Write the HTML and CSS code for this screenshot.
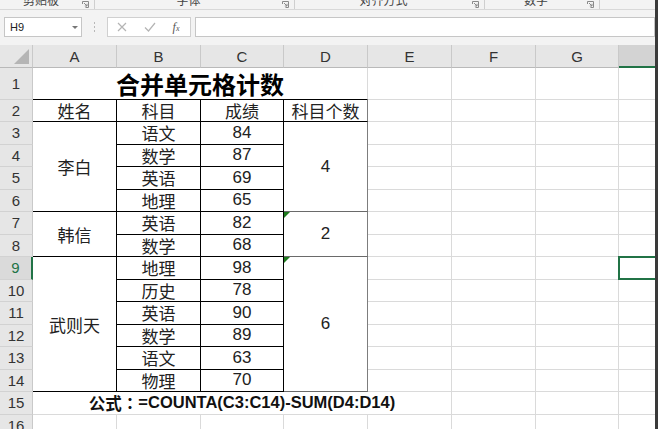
FILE: index.html
```html
<!DOCTYPE html>
<html lang="zh">
<head>
<meta charset="utf-8">
<title>合并单元格计数</title>
<link rel="stylesheet" href="styles.css">
</head>
<body>
<div class="app">
  <div class="ribbon">
    <div class="grp g1"><span class="lbl">剪贴板</span><svg class="launch" width="7" height="7" viewBox="0 0 7 7"><path d="M0.5 3V0.5H6.5V6.5H3.5" stroke="#8a8a8a" fill="none"/><path d="M2 2L5 5M5 2.8V5H2.8" stroke="#8a8a8a" fill="none"/></svg></div>
    <div class="grp g2"><span class="lbl">字体</span><svg class="launch" width="7" height="7" viewBox="0 0 7 7"><path d="M0.5 3V0.5H6.5V6.5H3.5" stroke="#8a8a8a" fill="none"/><path d="M2 2L5 5M5 2.8V5H2.8" stroke="#8a8a8a" fill="none"/></svg></div>
    <div class="grp g3"><span class="lbl">对齐方式</span><svg class="launch" width="7" height="7" viewBox="0 0 7 7"><path d="M0.5 3V0.5H6.5V6.5H3.5" stroke="#8a8a8a" fill="none"/><path d="M2 2L5 5M5 2.8V5H2.8" stroke="#8a8a8a" fill="none"/></svg></div>
    <div class="grp g4"><span class="lbl">数字</span><svg class="launch" width="7" height="7" viewBox="0 0 7 7"><path d="M0.5 3V0.5H6.5V6.5H3.5" stroke="#8a8a8a" fill="none"/><path d="M2 2L5 5M5 2.8V5H2.8" stroke="#8a8a8a" fill="none"/></svg></div>
  </div>

  <div class="fbar">
    <div class="namebox"><span class="ref">H9</span><span class="dd"></span></div>
    <div class="vdots"><span></span><span></span><span></span></div>
    <div class="btns">
      <svg width="10" height="10" viewBox="0 0 10 10"><path d="M1 1L9 9M9 1L1 9" stroke="#b4b4b4" stroke-width="1.2" fill="none"/></svg>
      <svg width="12" height="10" viewBox="0 0 12 10"><path d="M1 5.5L4.5 9L11 1" stroke="#b4b4b4" stroke-width="1.2" fill="none"/></svg>
      <span class="fx">f<span class="fxs">x</span></span>
    </div>
    <div class="finput"></div>
  </div>

  <div class="sheet">
    <div class="ch corner"><span class="tri"></span></div>
    <div class="ch">A</div><div class="ch">B</div><div class="ch">C</div><div class="ch">D</div>
    <div class="ch">E</div><div class="ch">F</div><div class="ch">G</div><div class="ch hsel"></div>

    <div class="rh">1</div>
    <div class="c title">合并单元格计数</div>
    <div class="c"></div><div class="c"></div><div class="c"></div><div class="c"></div>

    <div class="rh">2</div>
    <div class="c t">姓名</div><div class="c t">科目</div><div class="c t">成绩</div><div class="c t dr">科目个数</div>
    <div class="c"></div><div class="c"></div><div class="c"></div><div class="c"></div>

    <div class="rh">3</div>
    <div class="c t rs4">李白</div><div class="c t">语文</div><div class="c t">84</div><div class="c t dr db rs4">4</div>
    <div class="c"></div><div class="c"></div><div class="c"></div><div class="c"></div>

    <div class="rh">4</div>
    <div class="c t">数学</div><div class="c t">87</div>
    <div class="c"></div><div class="c"></div><div class="c"></div><div class="c"></div>

    <div class="rh">5</div>
    <div class="c t">英语</div><div class="c t">69</div>
    <div class="c"></div><div class="c"></div><div class="c"></div><div class="c"></div>

    <div class="rh">6</div>
    <div class="c t">地理</div><div class="c t">65</div>
    <div class="c"></div><div class="c"></div><div class="c"></div><div class="c"></div>

    <div class="rh">7</div>
    <div class="c t rs2">韩信</div><div class="c t">英语</div><div class="c t">82</div><div class="c t dr db rs2 err">2</div>
    <div class="c"></div><div class="c"></div><div class="c"></div><div class="c"></div>

    <div class="rh">8</div>
    <div class="c t">数学</div><div class="c t">68</div>
    <div class="c"></div><div class="c"></div><div class="c"></div><div class="c"></div>

    <div class="rh rsel">9</div>
    <div class="c t rs6">武则天</div><div class="c t">地理</div><div class="c t">98</div><div class="c t dr db rs6 err">6</div>
    <div class="c"></div><div class="c"></div><div class="c"></div><div class="c sel"></div>

    <div class="rh">10</div>
    <div class="c t">历史</div><div class="c t">78</div>
    <div class="c"></div><div class="c"></div><div class="c"></div><div class="c"></div>

    <div class="rh">11</div>
    <div class="c t">英语</div><div class="c t">90</div>
    <div class="c"></div><div class="c"></div><div class="c"></div><div class="c"></div>

    <div class="rh">12</div>
    <div class="c t">数学</div><div class="c t">89</div>
    <div class="c"></div><div class="c"></div><div class="c"></div><div class="c"></div>

    <div class="rh">13</div>
    <div class="c t">语文</div><div class="c t">63</div>
    <div class="c"></div><div class="c"></div><div class="c"></div><div class="c"></div>

    <div class="rh">14</div>
    <div class="c t">物理</div><div class="c t">70</div>
    <div class="c"></div><div class="c"></div><div class="c"></div><div class="c"></div>

    <div class="rh">15</div>
    <div class="c formula">公式<span class="colon">：</span>=COUNTA(C3:C14)-SUM(D4:D14)</div>
    <div class="c"></div><div class="c"></div><div class="c"></div>

    <div class="rh">16</div>
    <div class="c"></div><div class="c"></div><div class="c"></div><div class="c"></div>
    <div class="c"></div><div class="c"></div><div class="c"></div><div class="c"></div>
  </div>

  <div class="edge"></div>
</div>
</body>
</html>
```

FILE: styles.css
```css
* { box-sizing: border-box; margin: 0; padding: 0; }
html, body { width: 658px; height: 429px; overflow: hidden; background: #fff; }
body { font-family: "Liberation Sans", "Noto Sans CJK SC", sans-serif; color: #222; }

.app { position: relative; width: 658px; height: 429px; overflow: hidden; background: #f3f3f3; }

/* ribbon group labels (cut off at top, as in the reference) */
.ribbon { height: 10px; border-bottom: 1px solid #d8d8d8; display: flex; overflow: hidden; }
.grp { display: flex; align-items: flex-start; height: 9px; padding-right: 3px; border-right: 1px solid #cfcfcf; }
.g1 { width: 95px; }
.g2 { width: 200px; }
.g3 { width: 190px; }
.g4 { width: 115px; }
.lbl { flex: 1; text-align: center; font-family: "Noto Sans CJK SC", sans-serif; font-size: 12px; line-height: 12px; margin-top: -6px; color: #444; }
.launch { margin-top: 1px; margin-right: 2px; flex: none; }

/* formula bar */
.fbar { display: flex; align-items: center; height: 35px; padding: 7px 3px 8px 4px; }
.namebox { width: 78px; height: 20px; background: #fff; border: 1px solid #c6c6c6; display: flex; align-items: center; justify-content: space-between; padding: 0 3px 0 5px; }
.ref { font-size: 11px; color: #222; }
.dd { width: 0; height: 0; border-left: 3px solid transparent; border-right: 3px solid transparent; border-top: 3px solid #777; }
.vdots { width: 25px; height: 20px; display: flex; flex-direction: column; align-items: center; justify-content: center; gap: 2px; }
.vdots span { width: 1px; height: 2px; background: #b8b8b8; }
.btns { width: 84px; height: 20px; background: #fff; border: 1px solid #d0d0d0; display: flex; align-items: center; justify-content: space-around; padding-right: 2px; }
.fx { font-family: "Liberation Serif", serif; font-style: italic; font-size: 12px; color: #555; line-height: 1; }
.fxs { font-size: 8px; }
.finput { flex: 1; height: 20px; margin-left: 4px; background: #fff; border: 1px solid #c6c6c6; }

/* sheet grid */
.sheet {
  display: grid;
  grid-template-columns: 33px 84px 84px 83px 84px 84px 84px 83px 1fr;
  grid-template-rows: 23px 31.5px repeat(15, 22.5px);
  background: #fff;
}
.ch, .rh { background: #e6e6e6; color: #333; font-size: 15px; display: flex; align-items: center; justify-content: center; }
.ch { border-right: 1px solid #c9c9c9; border-bottom: 1px solid #b9b9b9; }
.rh { border-right: 1px solid #c9c9c9; border-bottom: 1px solid #d2d2d2; }
.corner { position: relative; }
.tri { position: absolute; right: 3px; bottom: 3px; width: 15px; height: 15px; background: #b5b5b5; clip-path: polygon(100% 0, 100% 100%, 0 100%); }
.hsel { background: #d3d3d3; border-bottom: 2px solid #217346; }
.rsel { background: #dadada; color: #217346; border-right: 2px solid #217346; }

.c { border-right: 1px solid #dadada; border-bottom: 1px solid #dadada; display: flex; align-items: center; justify-content: center; font-size: 17px; color: #222; position: relative; }
.title { grid-column: span 4; font-family: "Noto Sans CJK SC", sans-serif; font-weight: 700; font-size: 24px; color: #000; border-bottom-color: #000; }
.t { border-right-color: #000; border-bottom-color: #000; }
.dr { border-right-color: #7d7d7d; }
.db { border-bottom-color: #6a6a6a; }
.rs2 { grid-row: span 2; }
.rs4 { grid-row: span 4; }
.rs6 { grid-row: span 6; }
.err::before { content: ""; position: absolute; left: 0; top: 0; width: 6px; height: 6px; background: #1e7b1e; clip-path: polygon(0 0, 100% 0, 0 100%); }
.formula { grid-column: span 5; font-weight: 700; font-size: 16.5px; color: #111; border-right-color: #dadada; }
.colon { font-family: "Noto Sans CJK TC", sans-serif; }
.sel::after { content: ""; position: absolute; left: -1px; top: -1px; right: -1px; bottom: -1px; border: 2px solid #217346; }

.edge { position: absolute; right: 0; top: 0; bottom: 0; width: 3px; background: #3a3a3a; }
```
